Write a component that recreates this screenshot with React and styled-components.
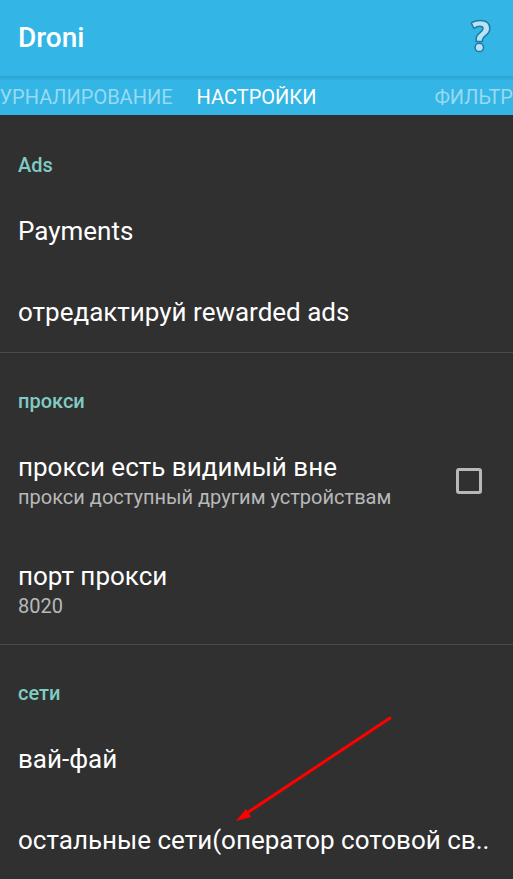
import React, { useState } from 'react';
import styled, { createGlobalStyle } from 'styled-components';

const COLORS = {
  bar: '#33b5e5',
  background: '#303030',
  accent: '#80cbc4',
  text: '#ffffff',
  textSecondary: '#b8b8b8',
  divider: '#4b4b4b',
  arrow: '#ff0000',
};

const GlobalStyle = createGlobalStyle`
  * {
    box-sizing: border-box;
  }
  body {
    margin: 0;
    background: ${COLORS.background};
    font-family: Roboto, "Noto Sans", sans-serif;
  }
`;

const Screen = styled.div`
  display: flex;
  flex-direction: column;
  height: 100vh;
  color: ${COLORS.text};
`;

const AppBar = styled.header`
  display: flex;
  flex: none;
  align-items: center;
  justify-content: space-between;
  height: 76px;
  padding: 0 18px;
  background: ${COLORS.bar};
`;

const AppTitle = styled.h1`
  margin: 0;
  font-size: 28px;
  line-height: 32px;
  font-weight: 500;
`;

const HelpButton = styled.button`
  display: flex;
  padding: 0 2px;
  border: 0;
  background: none;
  cursor: pointer;
`;

const Tabs = styled.nav`
  display: grid;
  flex: none;
  grid-template-columns: minmax(0, 1fr) auto minmax(0, 1fr);
  align-items: center;
  height: 39px;
  padding-top: 2px;
  background: linear-gradient(#2ca3d0, ${COLORS.bar} 5px);
`;

const TabSlot = styled.div`
  display: flex;
  justify-content: ${props => props.$align};
  padding: ${props => props.$padding};
  overflow: hidden;
`;

const Tab = styled.button`
  flex: none;
  padding: 0;
  border: 0;
  background: none;
  color: ${props => (props.$active ? COLORS.text : '#99daf2')};
  font-family: inherit;
  font-size: 20px;
  line-height: 28px;
  white-space: nowrap;
  cursor: pointer;
`;

const Content = styled.main`
  flex: 1;
  min-height: 0;
  padding-top: 2px;
  overflow-y: auto;
  scrollbar-width: none;
`;

const Section = styled.section`
  position: relative;
  & + & {
    border-top: 1px solid ${COLORS.divider};
  }
`;

const SectionTitle = styled.h2`
  margin: 0;
  padding: 34px 18px 11px;
  color: ${COLORS.accent};
  font-size: 20px;
  line-height: 28px;
  font-weight: 500;
`;

const Row = styled.div`
  display: flex;
  align-items: center;
  justify-content: space-between;
  min-height: ${props => (props.$tall ? '109px' : '81px')};
  padding: 0 31px 0 18px;
`;

const RowLink = styled(Row).attrs({ as: 'a', href: '#' })`
  color: inherit;
  text-decoration: none;
`;

const Texts = styled.span`
  display: flex;
  flex-direction: column;
`;

const Title = styled.span`
  font-size: 26px;
  line-height: 32px;
  white-space: nowrap;
`;

const Summary = styled.span`
  color: ${COLORS.textSecondary};
  font-size: 20px;
  line-height: 28px;
`;

const Checkbox = styled.input`
  flex: none;
  width: 26px;
  height: 26px;
  margin: 0;
  appearance: none;
  border: 3px solid #b8b8b8;
  border-radius: 3px;
  &:checked {
    background: ${COLORS.accent};
  }
`;

// Lies over the rows of the last section
const Arrow = styled.svg`
  position: absolute;
  top: 70px;
  left: 235px;
  pointer-events: none;
`;

function HelpIcon() {
  return (
    <svg width="26" height="40" viewBox="0 0 26 40" fill="#b9e3f5" stroke="#1d7ba3" strokeWidth="1.5" strokeLinejoin="round">
      <path d="M4.2 4.8C7 3.3 10 2.5 13.4 2.5C19.2 2.5 22.8 5.4 22.8 10.3C22.8 13.6 21.3 15.8 18.6 17.7C16.3 19.3 15.5 20.2 15.5 21.7V23.4H9.2V21C9.2 18.3 10.4 16.5 12.8 14.8C15.1 13.1 16 12.2 16 10.6C16 9 14.9 8.2 12.8 8.2C10.7 8.2 9 9 6.9 10.5Z" />
      <circle cx="12.3" cy="29.4" r="4.2" />
    </svg>
  );
}

function PrefLink({ title, summary }) {
  return (
    <RowLink $tall={Boolean(summary)}>
      <Texts>
        <Title>{title}</Title>
        {summary && <Summary>{summary}</Summary>}
      </Texts>
    </RowLink>
  );
}

function PrefCheckbox({ id, title, summary }) {
  const [checked, setChecked] = useState(false);
  return (
    <Row as="label" htmlFor={id} $tall>
      <Texts>
        <Title>{title}</Title>
        <Summary>{summary}</Summary>
      </Texts>
      <Checkbox id={id} type="checkbox" checked={checked} onChange={e => setChecked(e.target.checked)} />
    </Row>
  );
}

export default function App() {
  return (
    <Screen>
      <GlobalStyle />
      <AppBar>
        <AppTitle>Droni</AppTitle>
        <HelpButton type="button" aria-label="Help"><HelpIcon /></HelpButton>
      </AppBar>
      <Tabs>
        <TabSlot $align="flex-end" $padding="0 24px 0 0">
          <Tab type="button">УРНАЛИРОВАНИЕ</Tab>
        </TabSlot>
        <Tab type="button" $active>НАСТРОЙКИ</Tab>
        <TabSlot $align="flex-start" $padding="0 0 0 118px">
          <Tab type="button">ФИЛЬТР</Tab>
        </TabSlot>
      </Tabs>

      <Content>
        <Section>
          <SectionTitle>Ads</SectionTitle>
          <PrefLink title="Payments" />
          <PrefLink title="отредактируй rewarded ads" />
        </Section>
        <Section>
          <SectionTitle>прокси</SectionTitle>
          <PrefCheckbox
            id="proxy-visible"
            title="прокси есть видимый вне"
            summary="прокси доступный другим устройствам"
          />
          <PrefLink title="порт прокси" summary="8020" />
        </Section>
        <Section>
          <SectionTitle>сети</SectionTitle>
          <PrefLink title="вай-фай" />
          <PrefLink title="остальные сети(оператор сотовой св.." />
          <Arrow width="158" height="108" viewBox="0 0 158 108" aria-hidden="true">
            <path d="M155 3L12 98" stroke={COLORS.arrow} strokeWidth="3" strokeLinecap="round" />
            <path d="M1 106L11 94L16 102Z" fill={COLORS.arrow} />
          </Arrow>
        </Section>
      </Content>
    </Screen>
  );
}
